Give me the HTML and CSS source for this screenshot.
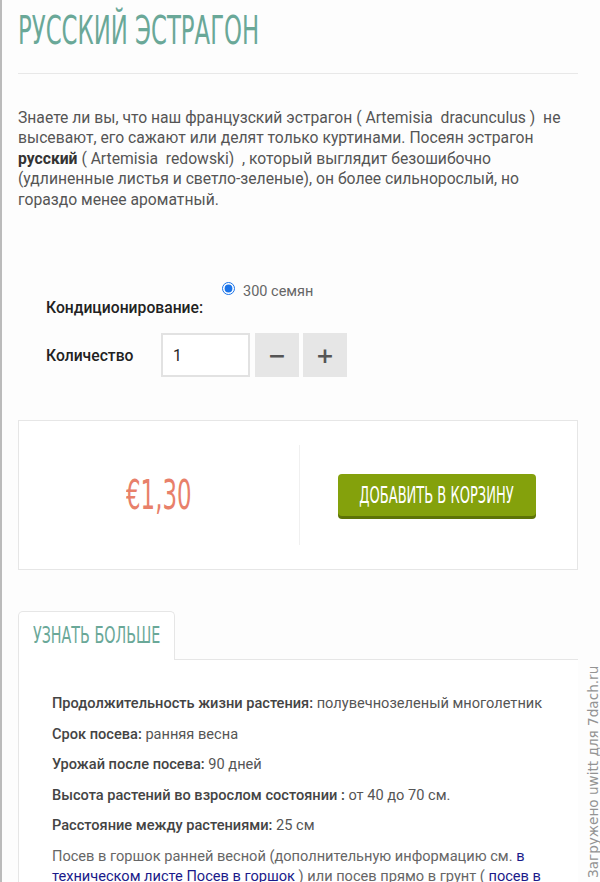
FILE: index.html
```html
<!DOCTYPE html>
<html lang="ru">
<head>
    <meta charset="UTF-8">
    <meta name="viewport" content="width=device-width, initial-scale=1.0">
    <title>Русский эстрагон</title>
    <link rel="stylesheet" href="styles.css">
</head>
<body>
    <div class="page">
        <h1 class="title"><span class="narrow">РУССКИЙ ЭСТРАГОН</span></h1>

        <p class="intro">Знаете ли вы, что наш французский эстрагон ( Artemisia&nbsp; dracunculus )&nbsp; не высевают, его сажают или делят только куртинами. Посеян эстрагон <b>русский</b> ( Artemisia&nbsp; redowski)&nbsp; , который выглядит безошибочно (удлиненные листья и светло-зеленые), он более сильнорослый, но гораздо менее ароматный.</p>

        <div class="options">
            <div class="option-row">
                <span class="option-label cond-label">Кондиционирование:</span>
                <label class="radio"><input type="radio" name="pack" checked> 300 семян</label>
            </div>
            <div class="option-row qty-row">
                <span class="option-label">Количество</span>
                <input type="text" class="qty" value="1">
                <button class="step">&minus;</button>
                <button class="step">+</button>
            </div>
        </div>

        <div class="buy-box">
            <div class="price-col">
                <span class="price narrow">€1,30</span>
            </div>
            <div class="cart-col">
                <button class="cart"><span class="narrow">ДОБАВИТЬ В КОРЗИНУ</span></button>
            </div>
        </div>

        <div class="tabs">
            <div class="tab"><span class="narrow">УЗНАТЬ БОЛЬШЕ</span></div>
        </div>
        <div class="tab-body">
            <p><b>Продолжительность жизни растения:</b> полувечнозеленый многолетник</p>
            <p><b>Срок посева:</b> ранняя весна</p>
            <p><b>Урожай после посева:</b> 90 дней</p>
            <p><b>Высота растений во взрослом состоянии :</b> от 40 до 70 см.</p>
            <p><b>Расстояние между растениями:</b> 25 см</p>
            <p class="plain">Посев в горшок ранней весной (дополнительную информацию см. <a href="#">в техническом листе Посев в горшок</a> ) или посев прямо в грунт ( <a href="#">посев в открытый грунт</a> ).</p>
        </div>
    </div>
    <div class="watermark">Загружено uwitt для 7dach.ru</div>
</body>
</html>
```

FILE: styles.css
```css
* {
    box-sizing: border-box;
    margin: 0;
    padding: 0;
}
body {
    font-family: Roboto, 'Liberation Sans', sans-serif;
    background: #fdfdfd;
    color: #555;
    font-size: 15.7px;
    border-left: 2px solid #bbb;
    height: 882px;
    overflow: hidden;
    position: relative;
}
.page {
    padding: 0 22px 0 16px;
}
.narrow {
    display: inline-block;
    font-family: 'Liberation Sans Narrow', 'DejaVu Sans Condensed', 'Liberation Sans', sans-serif;
    font-stretch: condensed;
    font-weight: normal;
    transform: scaleX(0.65);
    transform-origin: left center;
    white-space: nowrap;
}
.title {
    color: #6aa898;
    font-size: 39px;
    font-weight: normal;
    line-height: 1;
    padding-top: 11px;
    height: 74px;
    border-bottom: 1px solid #e8e8e8;
}
.intro {
    margin-top: 34px;
    line-height: 20.4px;
    padding-right: 14px;
}
.intro b {
    color: #333;
}
.options {
    margin-top: 73px;
    padding-left: 28px;
}
.option-row {
    display: flex;
    align-items: flex-start;
}
.option-label {
    color: #222;
    font-weight: 500;
    width: 176px;
}
.cond-label {
    padding-top: 15px;
}
.radio {
    display: flex;
    align-items: center;
    gap: 8px;
    color: #666;
    font-size: 14.5px;
}
.radio input {
    width: 13px;
    height: 13px;
    margin: 0;
    accent-color: #1a73e8;
    position: relative;
    top: -3px;
}
.qty-row {
    margin-top: 16px;
    align-items: center;
}
.qty-row .option-label {
    width: 115px;
}
.qty {
    width: 89px;
    height: 44px;
    border: 2px solid #e2e2e2;
    background: #fff;
    padding: 0 10px;
    font-family: Roboto, sans-serif;
    font-size: 15.7px;
    color: #222;
    outline: none;
}
.step {
    width: 44px;
    height: 44px;
    border: none;
    background: #e6e6e6;
    color: #555;
    font-size: 22px;
    font-weight: bold;
    margin-left: 4px;
    font-family: 'DejaVu Sans', sans-serif;
}
.qty + .step {
    margin-left: 5px;
}
.buy-box {
    margin-top: 43px;
    height: 150px;
    border: 1px solid #e6e6e6;
    background: #fff;
    display: flex;
    align-items: center;
    padding: 24px 0;
}
.price-col {
    width: 281px;
    height: 100%;
    border-right: 1px solid #f0f0f0;
    display: flex;
    align-items: center;
    justify-content: center;
}
.price {
    color: #e8806a;
    font-size: 41px;
    transform: scaleX(0.62);
    transform-origin: center;
}
.cart-col {
    flex: 1;
    display: flex;
    justify-content: center;
}
.cart {
    width: 198px;
    height: 42px;
    background: #84a10c;
    border: none;
    border-radius: 4px;
    box-shadow: 0 3px 0 #5d7306;
    color: #fff;
    font-size: 23px;
    cursor: pointer;
    margin-right: 4px;
    display: flex;
    align-items: center;
    justify-content: center;
    overflow: visible;
}
.cart .narrow {
    transform: scaleX(0.63);
    transform-origin: center;
    flex-shrink: 0;
}
.tabs {
    margin-top: 41px;
    display: flex;
}
.tab {
    width: 157px;
    height: 49px;
    border: 1px solid #e6e6e6;
    border-bottom: none;
    border-radius: 5px 5px 0 0;
    background: #fff;
    color: #6aa898;
    font-size: 23px;
    padding: 10px 0 0 14px;
    position: relative;
    z-index: 1;
    margin-bottom: -1px;
}
.tab .narrow {
    transform: scaleX(0.69);
}
.tab-body {
    border-top: 1px solid #e6e6e6;
    border-left: 1px solid #e6e6e6;
    padding: 33px 0 0 33px;
    height: 300px;
    background: #fff;
    font-size: 14.6px;
}
.tab-body p {
    line-height: 20px;
    margin-bottom: 10.5px;
    padding-right: 14px;
}
.tab-body b {
    color: #444;
    font-weight: 500;
}
.tab-body a {
    color: #1a1a8a;
    text-decoration: none;
}
.tab-body .plain {
    color: #666;
}
.watermark {
    position: absolute;
    left: 584px;
    top: 880px;
    transform: rotate(-90deg);
    transform-origin: left top;
    font-family: 'DejaVu Sans', sans-serif;
    font-size: 13.6px;
    color: #939393;
    white-space: nowrap;
    background: #fdfdfd;
    padding: 0 2px;
    line-height: 15px;
}
```
